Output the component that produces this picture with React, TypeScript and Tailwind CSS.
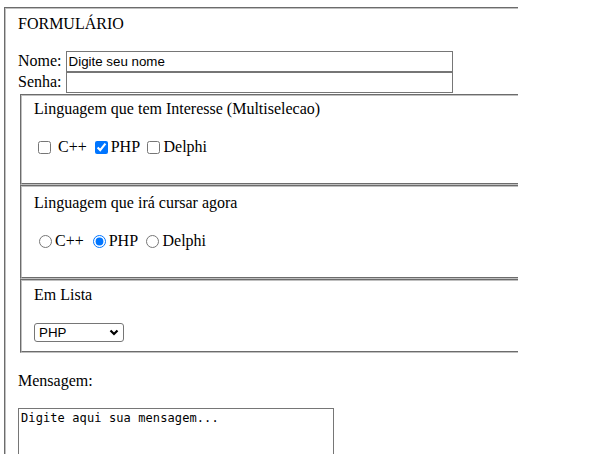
import React from "react";

const groove = "border-2 border-r-0 [border-style:groove] border-[#c0c0c0]";
const textInput =
	"h-[21px] w-[387px] border border-[#767676] bg-white px-[2px] font-['Liberation_Sans',Arial,sans-serif] text-[13.33px] text-black";
const box = "m-[3px_3px_3px_4px] align-[-2px]";
const radio = "m-[3px_3px_0px_5px] align-[-2px]";

function Chevron() {
	return (
		<svg
			width="10"
			height="7"
			viewBox="0 0 10 7"
			className="pointer-events-none absolute right-[5px] top-[6px]"
		>
			<path d="M1.5 1.5l3.5 3.5 3.5-3.5" fill="none" stroke="#000" strokeWidth="2.2" />
		</svg>
	);
}

export default function App() {
	return (
		<div className="min-h-screen bg-white pl-[4px] pt-[7px] font-['Liberation_Serif','Times_New_Roman',serif] text-[16px] leading-[18px] text-black">
			<div className={`w-[514px] ${groove} pl-[12px] pt-[6px] pb-[40px]`}>
				<div>FORMULÁRIO</div>

				<div className="mt-[18px] flex h-[21px] items-baseline gap-[4px]">
					<span>Nome:</span>
					<input className={textInput} defaultValue="Digite seu nome" />
				</div>
				<div className="flex h-[21px] items-baseline gap-[4px]">
					<span>Senha:</span>
					<input className={textInput} type="password" />
				</div>

				<div className={`ml-[2px] mt-[1px] w-[498px] ${groove} pl-[12px] pt-[4px] pb-[27px]`}>
					<div>Linguagem que tem Interesse (Multiselecao)</div>
					<div className="mt-[20px] h-[18px]">
						<input type="checkbox" className={box} /> C++{" "}
						<input type="checkbox" className={box} defaultChecked />
						PHP <input type="checkbox" className={box} />
						Delphi
					</div>
				</div>

				<div className={`ml-[2px] w-[498px] ${groove} pl-[12px] pt-[7px] pb-[27px]`}>
					<div>Linguagem que irá cursar agora</div>
					<div className="mt-[20px] h-[18px]">
						<input type="radio" name="curso" className={radio} />
						C++ <input type="radio" name="curso" className={radio} defaultChecked />
						PHP <input type="radio" name="curso" className={radio} />
						Delphi
					</div>
				</div>

				<div className={`ml-[2px] w-[498px] ${groove} pl-[12px] pt-[5px] pb-[9px]`}>
					<div>Em Lista</div>
					<div className="relative mt-[19px] h-[19px] w-[90px]">
						<select
							defaultValue="PHP"
							className="h-[19px] w-[90px] appearance-none rounded-[3px] border border-[#767676] bg-white pl-[4px] font-['Liberation_Sans',Arial,sans-serif] text-[13.33px] leading-[15px] text-black"
						>
							<option>C++</option>
							<option>PHP</option>
							<option>Delphi</option>
						</select>
						<Chevron />
					</div>
				</div>

				<div className="mt-[19px]">Mensagem:</div>
				<textarea
					className="mt-[18px] block h-[80px] w-[316px] resize-none border border-[#767676] bg-white p-[2px] font-['DejaVu_Sans_Mono',monospace] text-[12px] leading-[14px] tracking-[0.1px] text-black"
					defaultValue="Digite aqui sua mensagem..."
				/>
			</div>
		</div>
	);
}
